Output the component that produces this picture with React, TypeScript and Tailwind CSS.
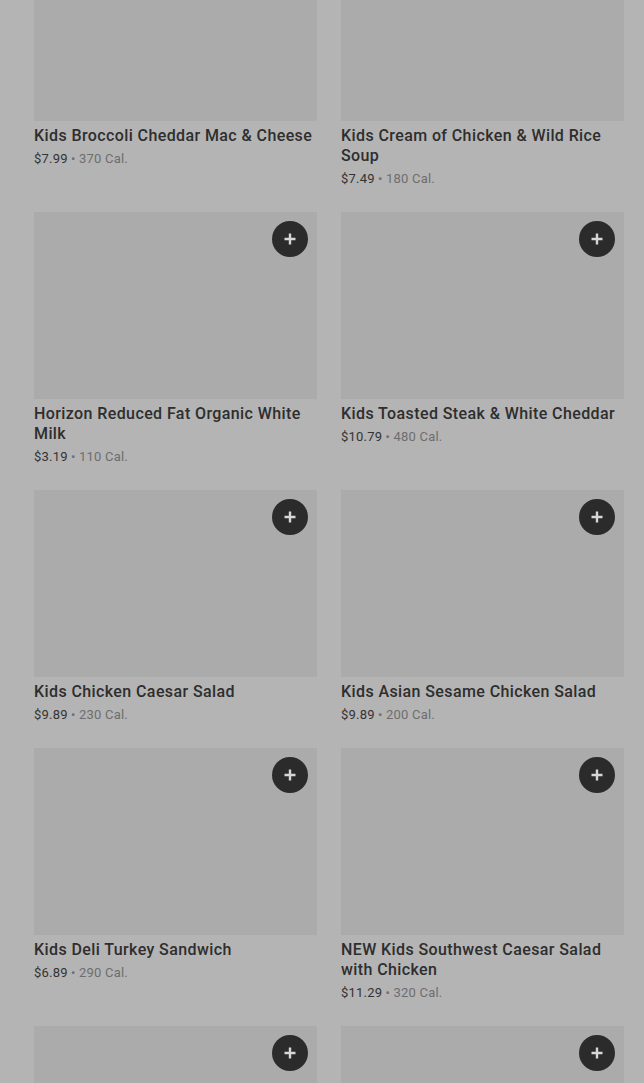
import React from "react";

const items = [
  { name: "Kids Broccoli Cheddar Mac & Cheese", price: "$7.99", cal: "370 Cal." },
  { name: "Kids Cream of Chicken & Wild Rice Soup", price: "$7.49", cal: "180 Cal." },
  { name: "Horizon Reduced Fat Organic White Milk", price: "$3.19", cal: "110 Cal." },
  { name: "Kids Toasted Steak & White Cheddar", price: "$10.79", cal: "480 Cal." },
  { name: "Kids Chicken Caesar Salad", price: "$9.89", cal: "230 Cal." },
  { name: "Kids Asian Sesame Chicken Salad", price: "$9.89", cal: "200 Cal." },
  { name: "Kids Deli Turkey Sandwich", price: "$6.89", cal: "290 Cal." },
  { name: "NEW Kids Southwest Caesar Salad with Chicken", price: "$11.29", cal: "320 Cal." },
  { name: "", price: "", cal: "" },
  { name: "", price: "", cal: "" },
];

function PlusButton() {
  return (
    <button className="absolute top-[9px] right-[9px] w-9 h-9 rounded-full bg-[#2b2b2b] flex items-center justify-center">
      <svg width="14" height="14" viewBox="0 0 14 14">
        <path d="M7 1.5v11M1.5 7h11" stroke="#d6d6d6" strokeWidth="2.4" />
      </svg>
    </button>
  );
}

function Card({ item }: { item: (typeof items)[number] }) {
  return (
    <div className="pb-[23px]">
      <div className="relative h-[187px] bg-[#ababab]">
        <PlusButton />
      </div>
      {item.name && (
        <>
          <div className="mt-[5px] text-[16px] leading-5 font-medium tracking-[0.4px] text-[#2e2e2e]">
            {item.name}
          </div>
          <div className="mt-[3px] text-[13px] leading-5 tracking-[0.2px] text-[#333]">
            {item.price}
            <span className="text-[#6e6e6e]"> • {item.cal}</span>
          </div>
        </>
      )}
    </div>
  );
}

export default function App() {
  return (
    <div
      className="w-[644px] h-[1083px] overflow-hidden bg-[#b4b4b4]"
      style={{ fontFamily: "Roboto, 'Noto Sans', sans-serif" }}
    >
      <div className="mt-[-66px] pl-[34px] pr-[20px] grid grid-cols-2 gap-x-6">
        {items.map((item, i) => (
          <Card key={i} item={item} />
        ))}
      </div>
    </div>
  );
}
